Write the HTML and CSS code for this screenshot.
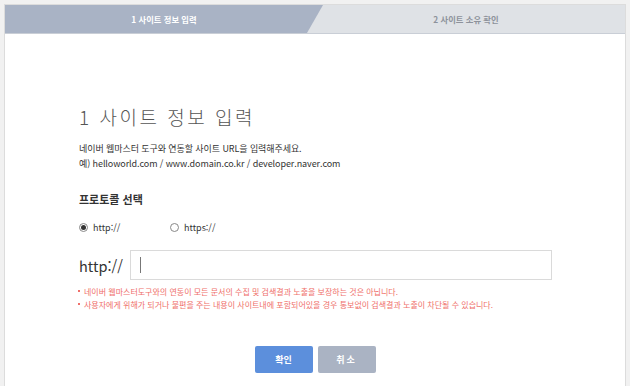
FILE: index.html
```html
<!DOCTYPE html>
<html lang="ko">
<head>
  <meta charset="UTF-8">
  <meta name="viewport" content="width=device-width, initial-scale=1.0">
  <title>사이트 등록</title>
  <link rel="stylesheet" href="styles.css">
</head>
<body>
  <div class="wrap">
    <div class="steps">
      <div class="step step-on">1 사이트 정보 입력</div>
      <div class="step step-off">2 사이트 소유 확인</div>
    </div>

    <div class="content">
      <h1 class="title">1 사이트 정보 입력</h1>
      <p class="desc">네이버 웹마스터 도구와 연동할 사이트 URL을 입력해주세요.<br>예) helloworld.com / www.domain.co.kr / developer.naver.com</p>

      <h2 class="sub-title">프로토콜 선택</h2>
      <div class="radio-group">
        <label class="radio-opt"><span class="radio checked"></span>http://</label>
        <label class="radio-opt"><span class="radio"></span>https://</label>
      </div>

      <div class="url-row">
        <span class="url-prefix">http://</span>
        <div class="url-input"><span class="caret"></span></div>
      </div>

      <ul class="notes">
        <li>네이버 웹마스터도구와의 연동이 모든 문서의 수집 및 검색결과 노출을 보장하는 것은 아닙니다.</li>
        <li>사용자에게 위해가 되거나 불편을 주는 내용이 사이트내에 포함되어있을 경우 통보없이 검색결과 노출이 차단될 수 있습니다.</li>
      </ul>

      <div class="button-group">
        <button class="primary-button">확인</button>
        <button class="secondary-button">취소</button>
      </div>
    </div>
  </div>
</body>
</html>
```

FILE: styles.css
```css
body {
  font-family: 'Noto Sans CJK KR', 'Noto Sans', sans-serif;
  margin: 0;
  padding: 4px 4px 0;
  background-color: #f1f1f1;
  color: #333;
}
.wrap {
  background-color: #fff;
  border: 1px solid #dcdcdc;
  border-bottom: none;
  min-height: 400px;
}
.steps {
  display: flex;
  height: 28px;
  background-color: #dfe2e6;
  border-bottom: 1px solid #c9ced6;
}
.step {
  display: flex;
  align-items: center;
  justify-content: center;
  font-size: 8.3px;
  font-weight: 700;
}
.step-on {
  flex: 0 0 318px;
  background-color: #a9b3c5;
  color: #fff;
  clip-path: polygon(0 0, 100% 0, calc(100% - 16px) 100%, 0 100%);
}
.step-off {
  flex: 1;
  padding-right: 16px;
  color: #8d929b;
}
.content {
  padding: 71px 0 0 74px;
}
.title {
  margin: 0;
  font-size: 19px;
  line-height: 24px;
  font-weight: 300;
  letter-spacing: 2.5px;
  color: #555;
}
.desc {
  margin: 11.5px 0 0;
  font-size: 9px;
  line-height: 15px;
  letter-spacing: -0.08px;
}
.sub-title {
  margin: 21.5px 0 0;
  font-size: 11px;
  line-height: 14px;
  font-weight: 700;
}
.radio-group {
  display: flex;
  margin-top: 14px;
  height: 14px;
}
.radio-opt {
  display: flex;
  align-items: center;
  gap: 5px;
  width: 91px;
  font-size: 9px;
}
.radio {
  width: 7px;
  height: 7px;
  border: 1px solid #888;
  border-radius: 50%;
  display: flex;
  align-items: center;
  justify-content: center;
}
.radio.checked::after {
  content: '';
  width: 5px;
  height: 5px;
  border-radius: 50%;
  background-color: #333;
}
.url-row {
  display: flex;
  align-items: center;
  gap: 9px;
  margin-top: 16px;
}
.url-prefix {
  font-size: 14.5px;
  width: 42px;
}
.url-input {
  box-sizing: border-box;
  width: 422px;
  height: 30px;
  border: 1px solid #dadada;
  display: flex;
  align-items: center;
  padding-left: 9px;
}
.caret {
  width: 1px;
  height: 16px;
  background-color: #777;
}
.notes {
  list-style: none;
  margin: 4.5px 0 0;
  padding: 0;
  font-size: 8px;
  line-height: 13px;
  color: #ef6f6a;
}
.notes li {
  display: flex;
  align-items: center;
  gap: 4px;
  margin-left: -1px;
}
.notes li::before {
  content: '';
  width: 2px;
  height: 2px;
  background-color: #ef6f6a;
}
.button-group {
  display: flex;
  justify-content: center;
  gap: 5px;
  margin: 35.5px 0 0 -74px;
}
button {
  width: 58px;
  height: 27px;
  border: none;
  border-radius: 2px;
  color: #fff;
  font-family: 'Noto Sans CJK KR', sans-serif;
  font-size: 9px;
  font-weight: 700;
  cursor: pointer;
}
.primary-button {
  background-color: #5c8fdc;
}
.secondary-button {
  background-color: #aab3c3;
  letter-spacing: 2px;
}
```
